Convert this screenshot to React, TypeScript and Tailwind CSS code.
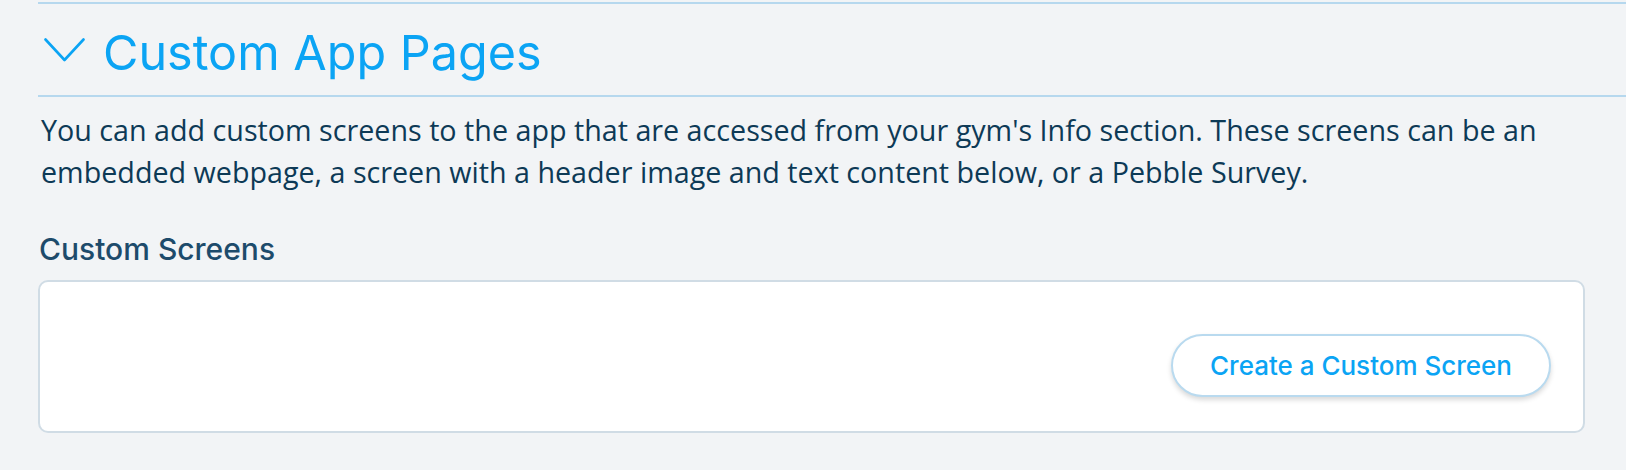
import React from "react";

export default function App() {
  return (
    <div className="min-h-[470px] w-full bg-[#f2f4f6] pl-[38px] pt-[2px]">
      <div className="border-t-2 border-[#b6d8ee]">
        <div className="flex items-start pt-[20px] pb-[13px] pl-[6px]">
          <svg width="41" height="24" viewBox="0 0 41 24" className="mt-[14px] shrink-0" fill="none">
            <polyline points="1.5,1.5 20.5,22 39.5,1.5" stroke="#0ba4f4" strokeWidth="2.6" strokeLinecap="round" strokeLinejoin="round" />
          </svg>
          <h1 className="ml-[18px] font-['Inter',sans-serif] text-[48.5px] leading-[58px] font-normal text-[#0ba4f4]">
            Custom App Pages
          </h1>
        </div>
      </div>
      <div className="border-t-2 border-[#b6d8ee]" />
      <p className="mt-[12px] pl-[3px] pr-[60px] font-['Open_Sans',sans-serif] text-[28.7px] leading-[42.3px] text-[#0d3a56]">
        You can add custom screens to the app that are accessed from your gym's Info section. These screens can be an embedded webpage, a screen with a header image and text content below, or a Pebble Survey.
      </p>
      <h2 className="mt-[37px] pl-[1px] font-['Inter',sans-serif] text-[30px] leading-[36px] font-medium text-[#1d4b6b]">
        Custom Screens
      </h2>
      <div className="mt-[13px] mr-[41px] flex justify-end rounded-[10px] border-2 border-[#d0dce5] bg-white pt-[52px] pb-[34px] pr-[32px]">
        <button className="flex h-[63px] w-[380px] items-center justify-center rounded-full border-2 border-[#b9daef] bg-white font-['Inter',sans-serif] text-[26px] font-medium text-[#0ba4f4] shadow-[0_3px_5px_rgba(0,0,0,0.15)]">
          Create a Custom Screen
        </button>
      </div>
    </div>
  );
}
